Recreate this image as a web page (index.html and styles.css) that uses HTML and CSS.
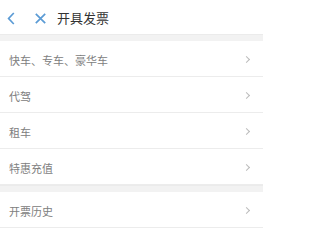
FILE: index.html
```html
<!DOCTYPE html>
<html lang="zh">
<head>
<meta charset="utf-8">
<link rel="stylesheet" href="styles.css">
</head>
<body>
<div class="screen">
<header class="nav">
  <span class="nav-btn back">
    <svg width="8" height="13" viewBox="0 0 8 13"><path d="M6.8 1 L1.6 6.5 L6.8 12" fill="none" stroke="#5b9bd5" stroke-width="1.7"/></svg>
  </span>
  <span class="nav-btn close">
    <svg width="11" height="11" viewBox="0 0 11 11"><path d="M0.8 0.8 L10.2 10.2 M10.2 0.8 L0.8 10.2" fill="none" stroke="#5b9bd5" stroke-width="1.7"/></svg>
  </span>
  <span class="title">开具发票</span>
</header>
<div class="gap"></div>
<ul class="list">
  <li class="row"><span>快车、专车、豪华车</span><i class="chev"></i></li>
  <li class="row"><span>代驾</span><i class="chev"></i></li>
  <li class="row"><span>租车</span><i class="chev"></i></li>
  <li class="row"><span>特惠充值</span><i class="chev"></i></li>
</ul>
<div class="gap"></div>
<ul class="list">
  <li class="row"><span>开票历史</span><i class="chev"></i></li>
</ul>
</div>
</body>
</html>
```
FILE: styles.css
```css
html, body { margin: 0; padding: 0; background: #fff; }
body { font-family: "Noto Sans CJK SC", "Noto Sans", sans-serif; }
.screen { width: 263px; }
.nav {
  height: 34px;
  display: flex;
  align-items: center;
  background: #fff;
  padding-left: 7px;
  box-sizing: border-box;
}
.nav-btn { display: flex; align-items: center; padding-top: 3px; }
.back { width: 28px; }
.close { width: 22px; }
.title { font-size: 13px; color: #333; padding-top: 1px; }
.gap { height: 7px; background: #f2f2f2; border-top: 1px solid #ebebeb; box-sizing: border-box; }
.list { list-style: none; margin: 0; padding: 0; }
.row {
  height: 36px;
  display: flex;
  align-items: center;
  justify-content: space-between;
  padding: 2px 14px 0 9px;
  box-sizing: border-box;
  border-bottom: 1px solid #ececec;
  font-size: 11px;
  color: #808080;
}
.chev {
  width: 4px; height: 4px;
  border-right: 1px solid #bbb;
  border-top: 1px solid #bbb;
  transform: rotate(45deg);
}
```
